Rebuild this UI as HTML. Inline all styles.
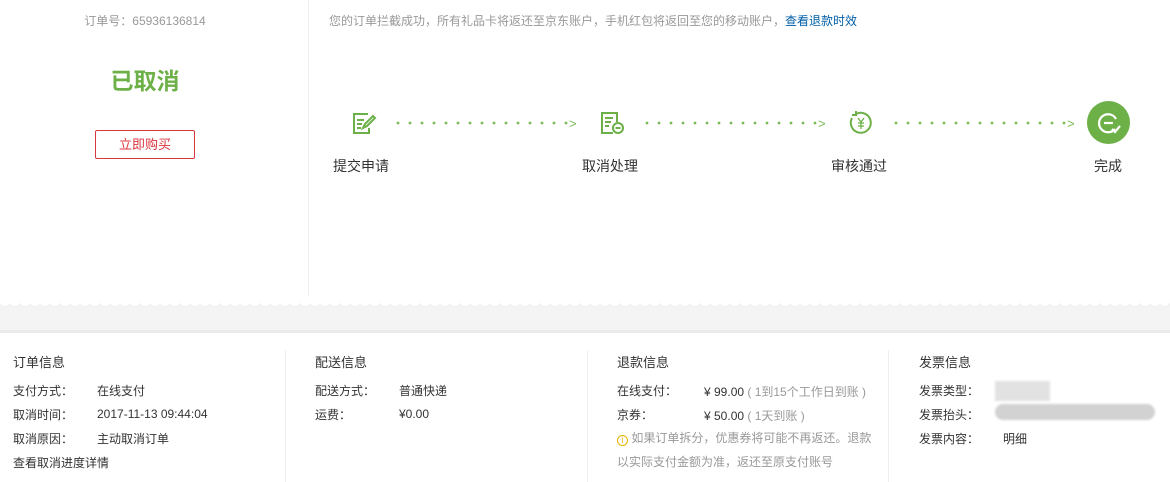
<!DOCTYPE html>
<html><head><meta charset="utf-8"><style>
*{margin:0;padding:0;box-sizing:border-box}
body{width:1170px;height:482px;overflow:hidden;background:#fff;font-family:"Liberation Sans","Noto Sans CJK SC",sans-serif;font-size:12px;color:#333;position:relative}
.a{position:absolute;white-space:nowrap}
.g{color:#999}
.dots{position:absolute;top:121px;height:4px;background-image:radial-gradient(circle,#7abd54 1.2px,transparent 1.6px);background-size:12px 4px;background-repeat:repeat-x}
.lbl{position:absolute;top:156px;font-size:14px;color:#333;width:80px;text-align:center}
.t{font-size:13px}
</style></head><body>
<div class="a g" style="left:0;width:290px;text-align:center;top:12px">订单号：65936136814</div>
<div class="a" style="left:0;width:290px;text-align:center;top:62px;font-size:23px;font-weight:bold;color:#6db047">已取消</div>
<div class="a" style="left:95px;top:130px;width:100px;height:29px;border:1px solid #d9363e;border-radius:2px;color:#d9363e;text-align:center;line-height:27px;font-size:13px">立即购买</div>
<div class="a" style="left:308px;top:0;width:1px;height:296px;background:#eee"></div>
<div class="a g" style="left:329px;top:12px">您的订单拦截成功，所有礼品卡将返还至京东账户，手机红包将返回至您的移动账户，<span style="color:#005ea7">查看退款时效</span></div>

<svg class="a" style="left:351px;top:110px" width="26" height="26" viewBox="0 0 26 26" fill="none" stroke="#6db047" stroke-width="2"><path d="M17 4H3v19h15v-5"/><path d="M6 10h7M6 14h5M6 18h4"/><path d="M12 18l2-4 8-8 2 2-8 8z"/></svg>
<div class="dots" style="left:392px;width:180px"></div>
<div class="a" style="left:569px;top:116px;color:#7abd54;font-size:13px">&gt;</div>
<svg class="a" style="left:599px;top:110px" width="26" height="26" viewBox="0 0 26 26" fill="none" stroke="#6db047" stroke-width="2"><path d="M18 12V3H3v20h11"/><path d="M6 8h8M6 12h6M6 16h4"/><circle cx="19" cy="18" r="5"/><path d="M16.5 18h5"/></svg>
<div class="dots" style="left:641px;width:180px"></div>
<div class="a" style="left:818px;top:116px;color:#7abd54;font-size:13px">&gt;</div>
<svg class="a" style="left:847px;top:109px" width="28" height="28" viewBox="0 0 28 28" fill="none" stroke="#6db047" stroke-width="2"><path d="M5 9A10 10 0 1 0 9 5"/><path d="M9 2v4H5"/><path d="M11 9l3 4 3-4M14 13v7M11 14h6M11 17h6" stroke-width="1.3"/></svg>
<div class="dots" style="left:890px;width:180px"></div>
<div class="a" style="left:1067px;top:116px;color:#7abd54;font-size:13px">&gt;</div>
<div class="a" style="left:1087px;top:101px;width:43px;height:43px;border-radius:50%;background:#6db047"></div>
<svg class="a" style="left:1095px;top:109px" width="28" height="28" viewBox="0 0 28 28" fill="none" stroke="#fff" stroke-width="2.2"><path d="M21 10A9 9 0 1 0 20 20"/><path d="M9 14h9"/><path d="M17 20l3 3 5-6"/></svg>
<div class="lbl" style="left:321px">提交申请</div>
<div class="lbl" style="left:570px">取消处理</div>
<div class="lbl" style="left:819px">审核通过</div>
<div class="lbl" style="left:1068px">完成</div>

<div class="a" style="left:0;top:304px;width:1170px;height:27px;background:#f4f4f4"></div>
<div class="a" style="left:0;top:300px;width:1170px;height:10px;background-image:radial-gradient(circle at 5px 1px,#fff 5px,#ececec 5.5px,transparent 6.5px);background-size:10px 10px"></div>
<div class="a" style="left:0;top:330px;width:1170px;height:3px;background:#ebebeb"></div>

<div class="a" style="left:285px;top:350px;width:1px;height:132px;background:#eee"></div>
<div class="a" style="left:587px;top:350px;width:1px;height:132px;background:#eee"></div>
<div class="a" style="left:888px;top:350px;width:1px;height:132px;background:#eee"></div>

<div class="a t" style="left:13px;top:352px">订单信息</div>
<div class="a" style="left:13px;top:382px">支付方式：</div><div class="a" style="left:97px;top:382px">在线支付</div>
<div class="a" style="left:13px;top:406px">取消时间：</div><div class="a" style="left:97px;top:407px">2017-11-13 09:44:04</div>
<div class="a" style="left:13px;top:430px">取消原因：</div><div class="a" style="left:97px;top:430px">主动取消订单</div>
<div class="a" style="left:13px;top:454px">查看取消进度详情</div>

<div class="a t" style="left:315px;top:352px">配送信息</div>
<div class="a" style="left:315px;top:382px">配送方式：</div><div class="a" style="left:399px;top:382px">普通快递</div>
<div class="a" style="left:315px;top:406px">运费：</div><div class="a" style="left:399px;top:407px">¥0.00</div>

<div class="a t" style="left:617px;top:352px">退款信息</div>
<div class="a" style="left:617px;top:382px">在线支付：</div><div class="a" style="left:704px;top:383px">¥ 99.00 <span class="g">( 1到15个工作日到账 )</span></div>
<div class="a" style="left:617px;top:406px">京券：</div><div class="a" style="left:704px;top:407px">¥ 50.00 <span class="g">( 1天到账 )</span></div>
<div class="a g" style="left:617px;top:426px;line-height:24px;white-space:normal;width:262px"><span style="display:inline-block;width:11px;height:11px;border:1px solid #e8b400;border-radius:50%;color:#e8b400;font-size:9px;line-height:9px;text-align:center;vertical-align:-1px">i</span> 如果订单拆分，优惠券将可能不再返还。退款以实际支付金额为准，返还至原支付账号</div>

<div class="a t" style="left:919px;top:352px">发票信息</div>
<div class="a" style="left:919px;top:382px">发票类型：</div>
<div class="a" style="left:995px;top:381px;width:55px;height:20px;background:#e2e2e2;filter:blur(1px)"></div>
<div class="a" style="left:919px;top:406px">发票抬头：</div>
<div class="a" style="left:995px;top:404px;width:160px;height:16px;border-radius:8px;background:#d2d2d2;filter:blur(1px)"></div>
<div class="a" style="left:919px;top:430px">发票内容：</div><div class="a" style="left:1003px;top:430px">明细</div>
</body></html>
